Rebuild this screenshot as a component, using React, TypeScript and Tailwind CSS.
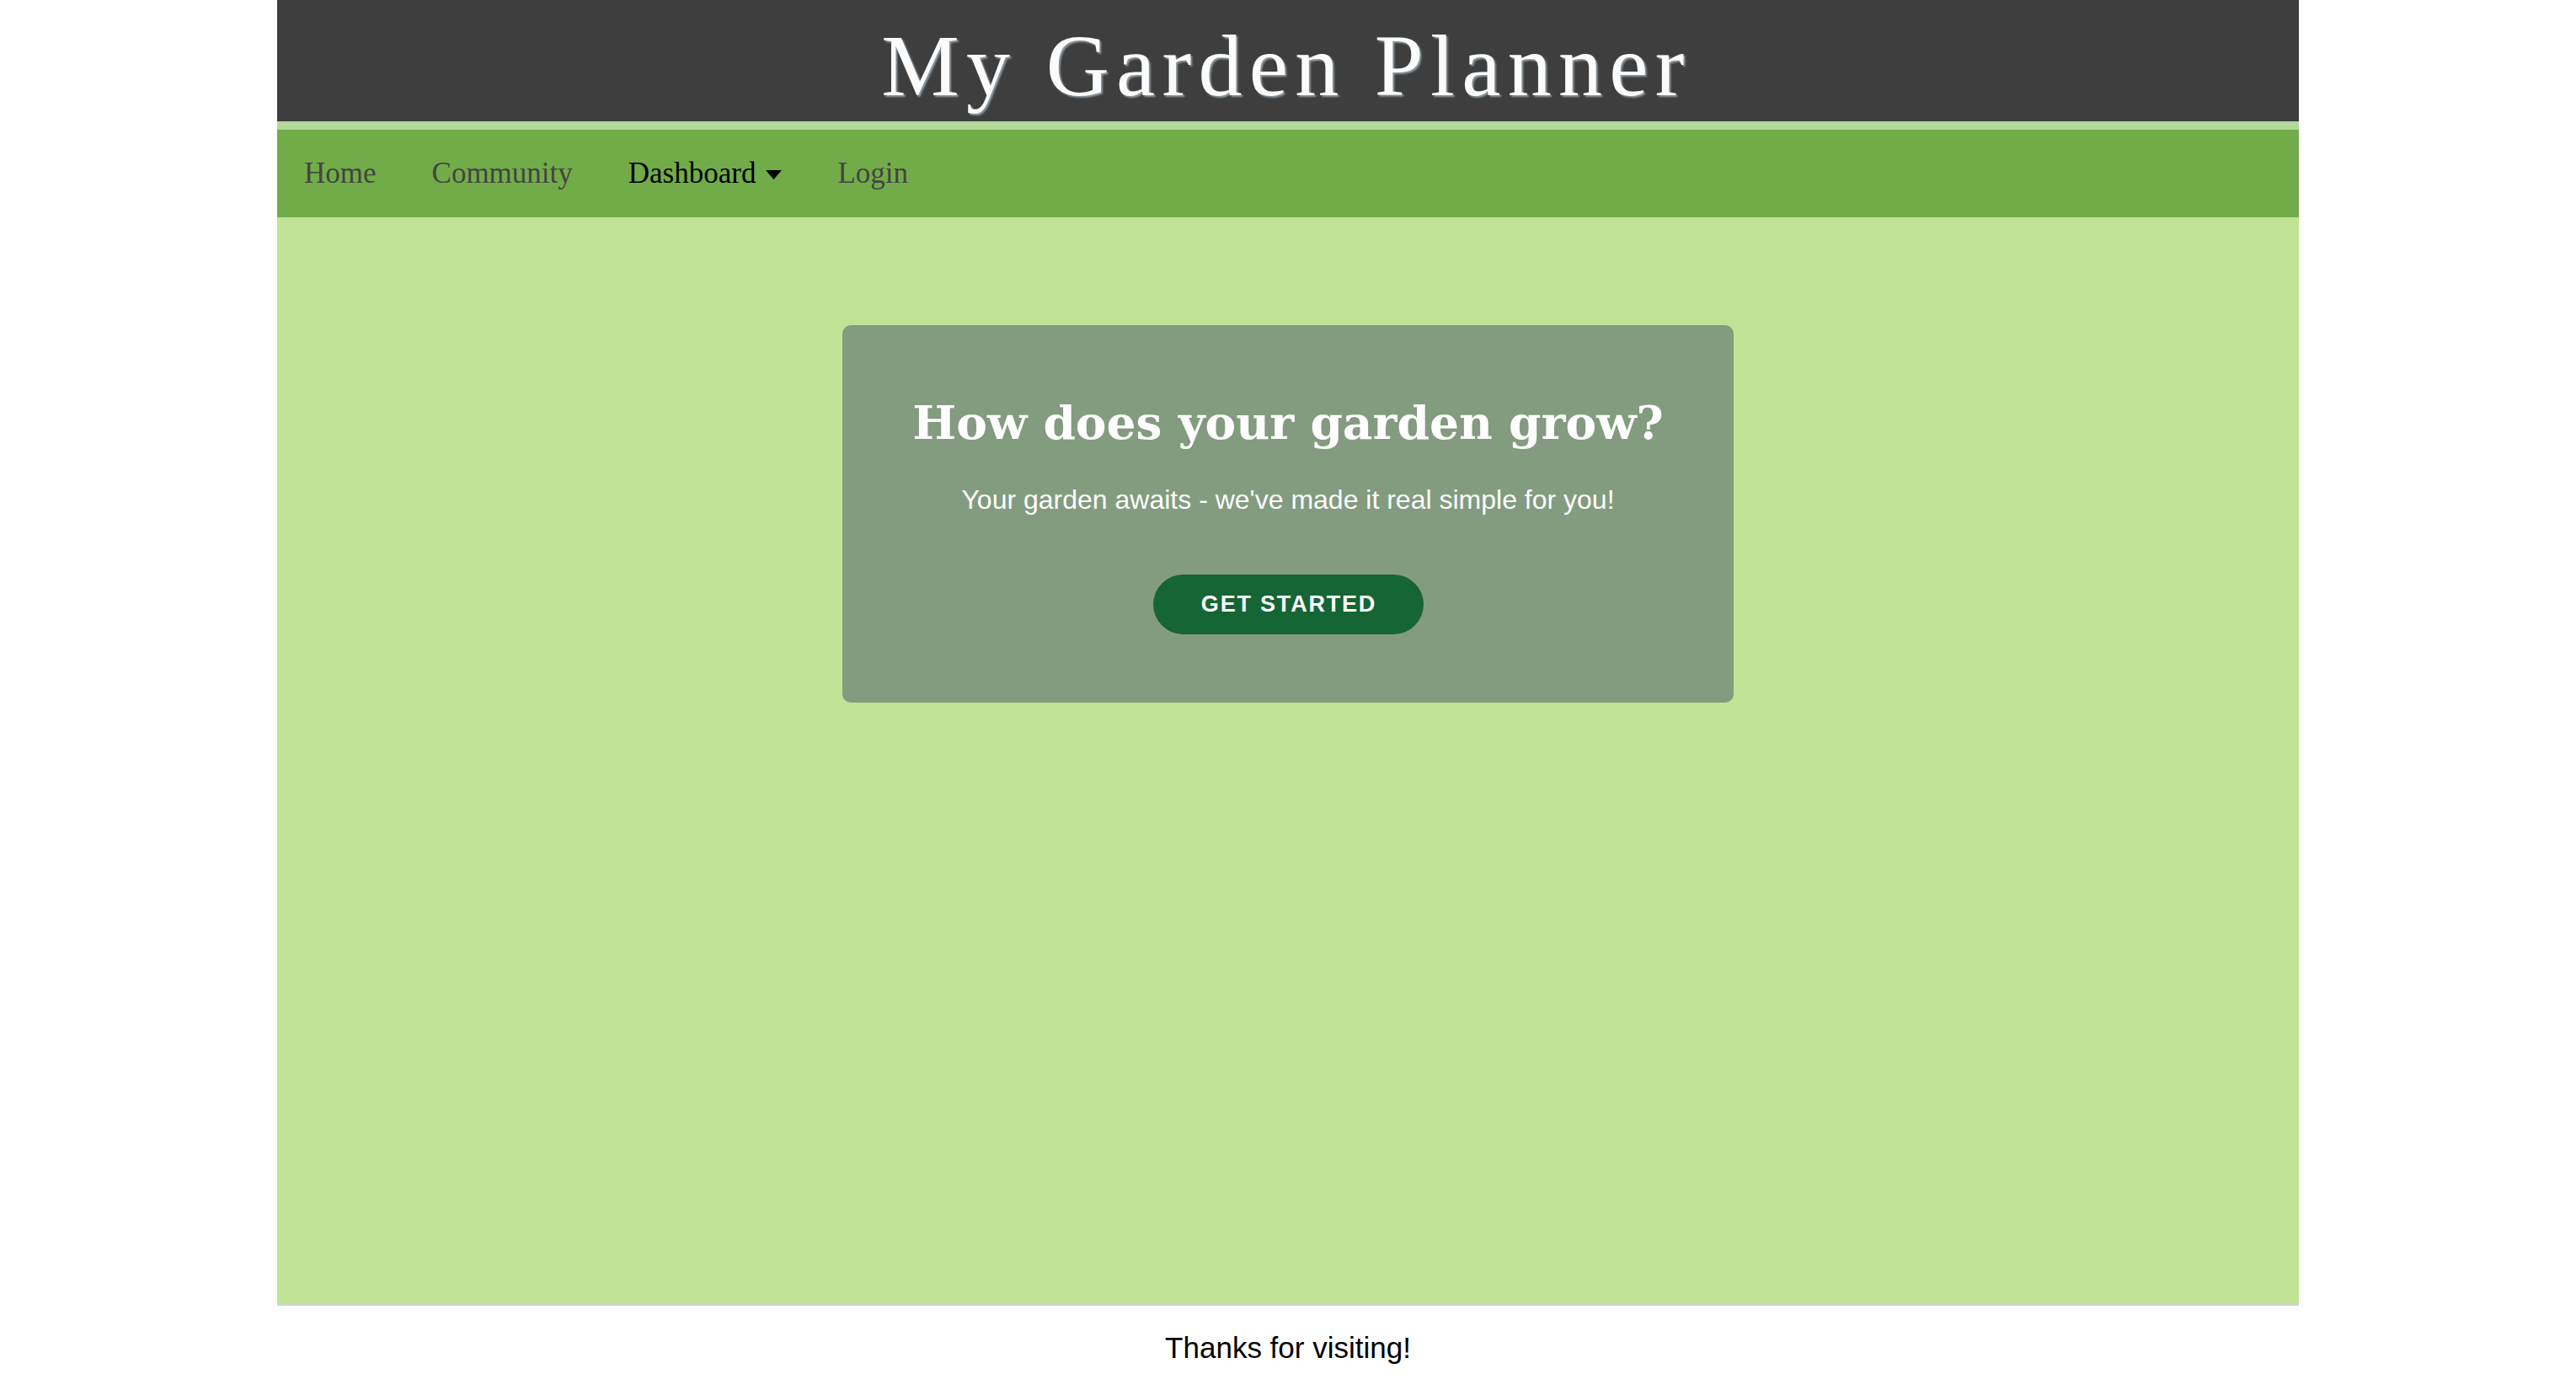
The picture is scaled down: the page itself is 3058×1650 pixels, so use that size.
export default function App() {
  const links = [
    { label: "Home", active: false, caret: false },
    { label: "Community", active: false, caret: false },
    { label: "Dashboard", active: true, caret: true },
    { label: "Login", active: false, caret: false },
  ];

  return (
    <div className="min-h-screen bg-white">
      <div className="mx-auto w-[2400px]">
        {/* Header */}
        <header className="h-[144px] bg-[#3e3e3e] pt-[26px] text-center">
          <h1 className="pr-[4px] font-['Liberation_Serif',serif] text-[104px] font-normal leading-none tracking-[8.3px] text-[#fbfbfb] [text-shadow:2px_2px_2px_#8e99a1]">
            My Garden Planner
          </h1>
        </header>

        {/* Nav */}
        <nav className="flex h-[114px] items-center gap-[66px] border-t-[10px] border-[#b3d898] bg-[#71ac48] pl-[32px] font-['Liberation_Serif',serif] text-[35px]">
          {links.map((link) => (
            <a
              key={link.label}
              href="#"
              className={`flex items-center gap-[12px] ${link.active ? "text-black" : "text-[#444444]"}`}
            >
              {link.label}
              {link.caret && (
                <svg width="19" height="11" viewBox="0 0 19 11" className="mt-[2px]">
                  <path d="M0 0h19L9.5 11z" fill="#000" />
                </svg>
              )}
            </a>
          ))}
        </nav>

        {/* Main */}
        <main className="h-[1292px] border-b-2 border-[#d2d2d2] bg-[#c0e396] pt-[128px]">
          <div className="mx-auto flex w-[1058px] flex-col items-center rounded-[10px] bg-[#839b7f] pb-[81px] pt-[88px] text-center">
            <h2 className="font-['DejaVu_Serif',serif] text-[55px] font-bold leading-none text-white">
              How does your garden grow?
            </h2>
            <p className="mt-[48px] font-['Liberation_Sans',Arial,sans-serif] text-[32px] leading-none text-white">
              Your garden awaits - we&apos;ve made it real simple for you!
            </p>
            <button className="mt-[73px] flex h-[71px] w-[321px] items-center justify-center rounded-full bg-[#166534] pl-[2px] font-['Liberation_Sans',Arial,sans-serif] text-[27px] font-bold tracking-[1.8px] text-white">
              GET STARTED
            </button>
          </div>
        </main>

        {/* Footer */}
        <footer className="flex h-[100px] items-center justify-center font-['Liberation_Sans',Arial,sans-serif] text-[35px] text-black">
          Thanks for visiting!
        </footer>
      </div>
    </div>
  );
}
